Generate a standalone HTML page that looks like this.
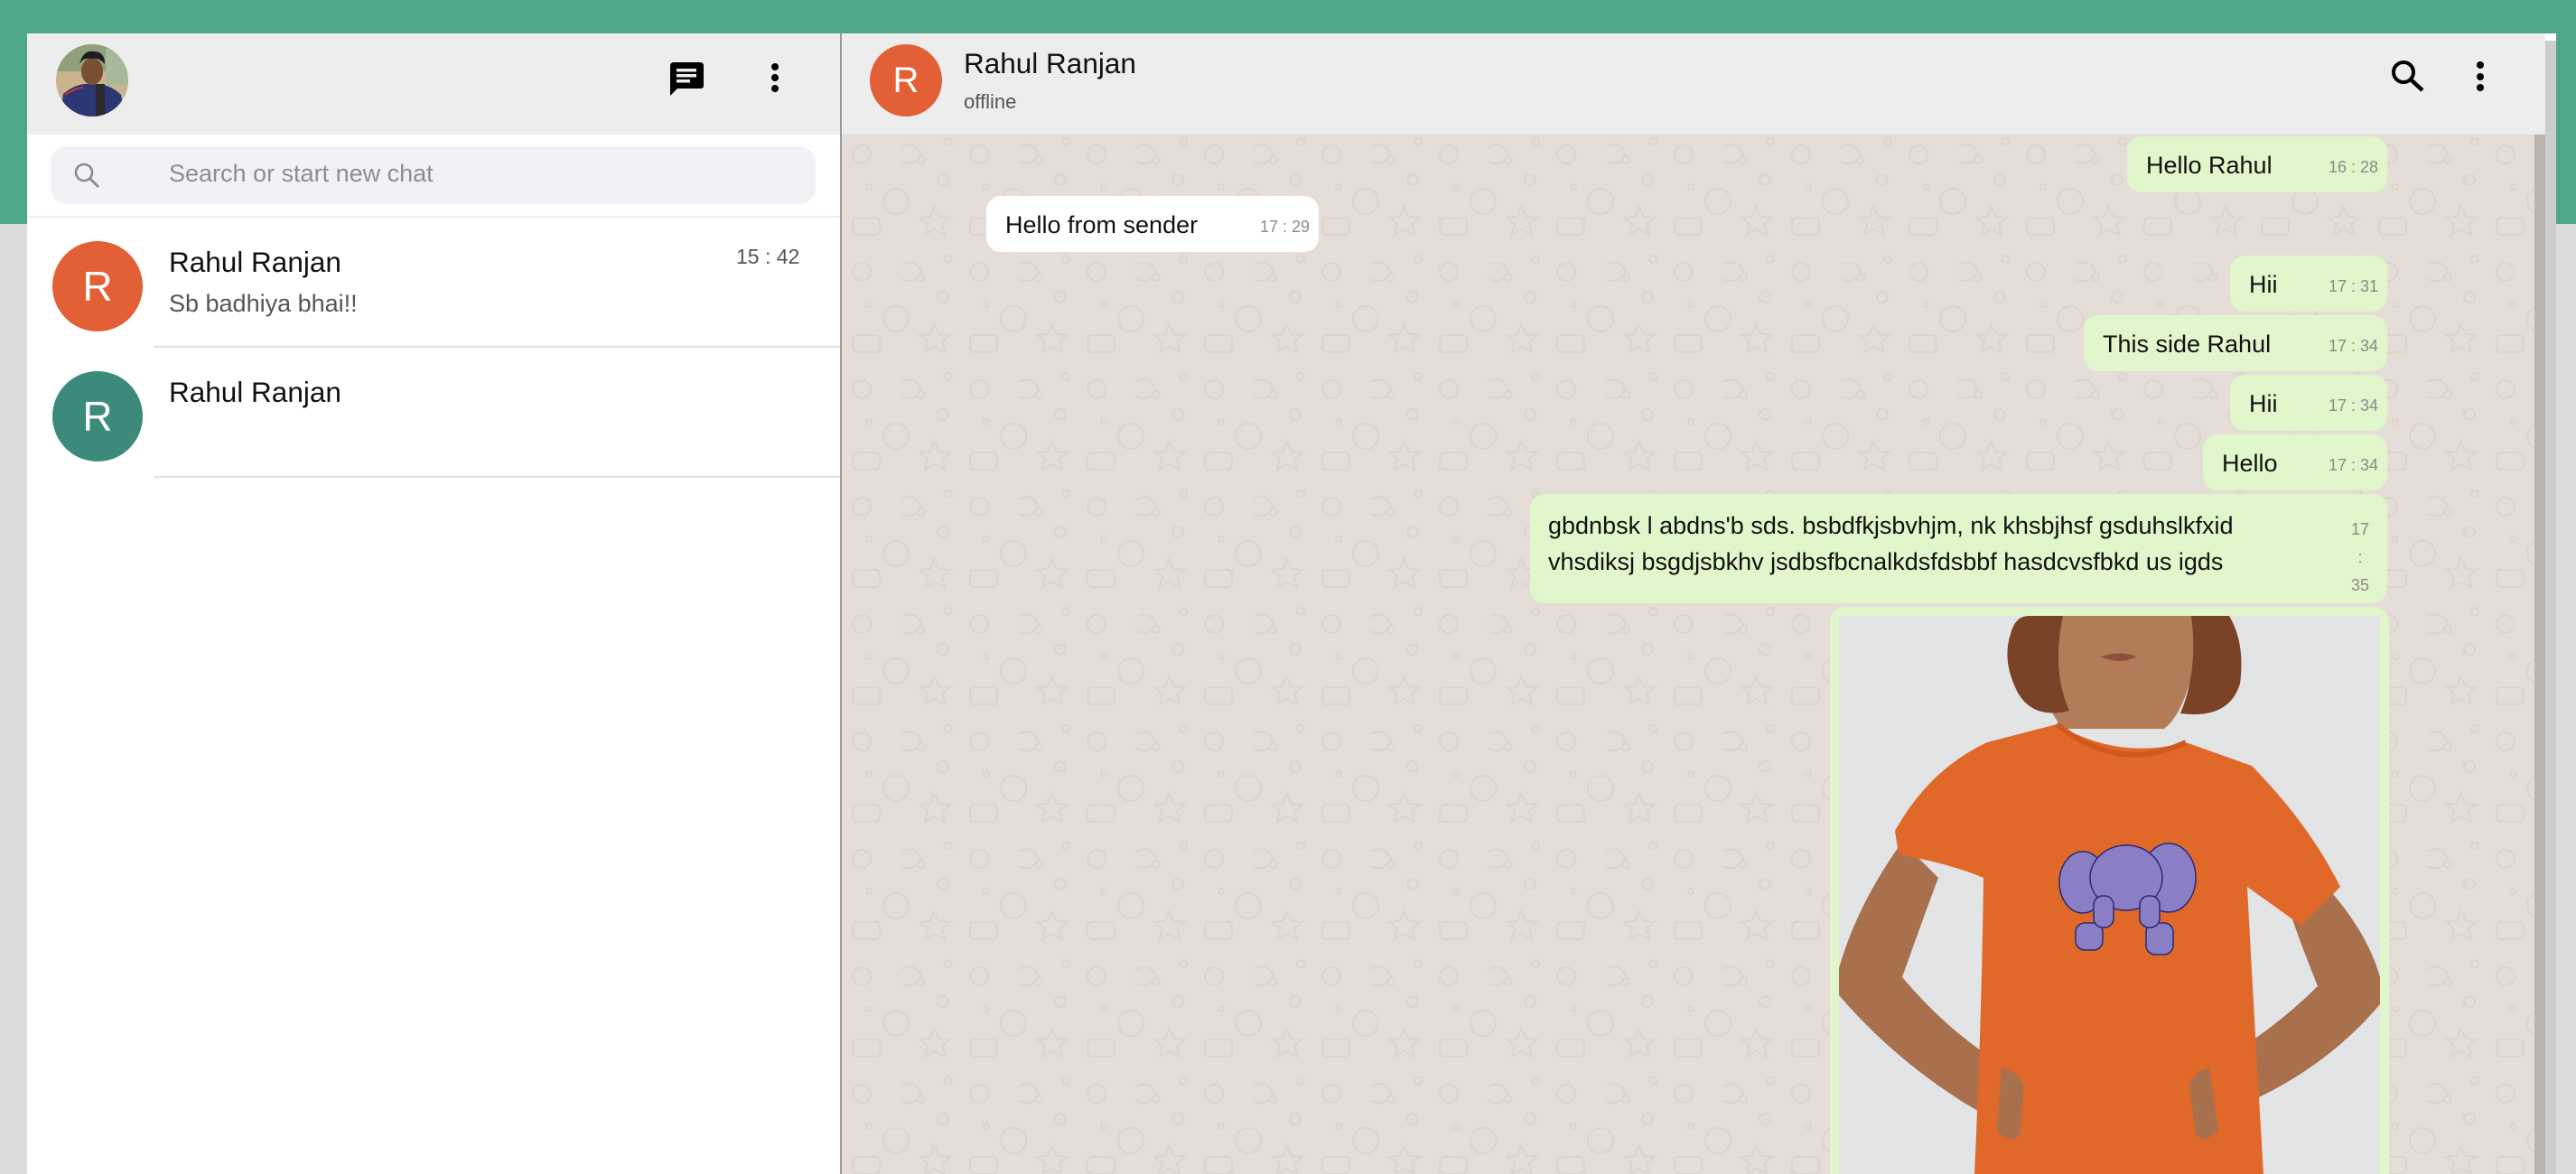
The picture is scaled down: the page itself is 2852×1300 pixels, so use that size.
<!DOCTYPE html>
<html><head><meta charset="utf-8">
<style>
*{margin:0;padding:0;box-sizing:border-box}
html,body{width:2852px;height:1300px;overflow:hidden}
body{background:#dcdcdc;font-family:"Liberation Sans",Arial,sans-serif;position:relative}
.abs{position:absolute}
.green{left:0;top:0;width:2852px;height:248px;background:#4ea787}
.left{left:30px;top:37px;width:900px;height:1263px;background:#fff}
.lhead{left:30px;top:37px;width:900px;height:112px;background:#ededed}
.search{left:56px;top:162px;width:847px;height:64px;background:#f0f2f5;border-radius:18px}
.ph{left:187px;top:177px;font-size:27px;color:#8e8e8e;white-space:nowrap}
.av{border-radius:50%;color:#fff;font-size:46px;text-align:center}
.name{font-size:31.5px;color:#111;white-space:nowrap}
.right{left:930px;top:37px;width:1888px;height:1263px;background:#e5ddd7;border-left:2px solid #9a9a9a}
.rhead{left:932px;top:37px;width:1886px;height:112px;background:#ededed}
.b{position:absolute;height:62px;border-radius:16px;background:#e1f6cb;white-space:nowrap}
.b .t{position:absolute;left:21px;top:17px;font-size:27px;color:#111}
.b .tm{position:absolute;right:10px;top:24px;font-size:18px;color:#8a8a8a}
</style></head><body>
<div class="abs green"></div>
<div class="abs left"></div>
<div class="abs lhead"></div>
<svg class="abs" style="left:62px;top:49px" width="80" height="80" viewBox="0 0 80 80">
<defs><clipPath id="c"><circle cx="40" cy="40" r="40"/></clipPath></defs>
<g clip-path="url(#c)">
<rect width="80" height="80" fill="#c9b48e"/>
<rect width="80" height="30" fill="#8fa07a"/>
<rect x="55" y="5" width="25" height="40" fill="#a8b89a"/>
<path d="M5 80 L8 55 Q20 45 32 44 L48 44 Q62 46 72 56 L76 80Z" fill="#2b3672"/>
<path d="M10 56 Q22 48 30 48" stroke="#c33" stroke-width="2" fill="none"/>
<ellipse cx="40" cy="30" rx="12" ry="15" fill="#7a4e33"/>
<path d="M26 22 Q30 6 42 8 Q54 8 54 22 Q48 14 40 16 Q30 14 26 22Z" fill="#1b1b24"/>
<rect x="44" y="44" width="10" height="36" fill="#2a2a2e"/>
</g></svg>
<svg class="abs" style="left:742px;top:69px" width="37" height="38" viewBox="0 0 37 38">
<path d="M4 0 H33 Q37 0 37 4 V26 Q37 29 33 29 H8 L0 37 V4 Q0 0 4 0Z" fill="#000"/>
<rect x="7" y="7" width="22" height="3.5" fill="#ededed"/>
<rect x="7" y="13" width="22" height="3.5" fill="#ededed"/>
<rect x="7" y="19" width="15" height="3.5" fill="#ededed"/>
</svg>
<svg class="abs" style="left:852px;top:66px" width="12" height="40"><circle cx="6" cy="8" r="4"/><circle cx="6" cy="20" r="4"/><circle cx="6" cy="32" r="4"/></svg>
<div class="abs search"></div>
<svg class="abs" style="left:80px;top:178px" width="34" height="34" viewBox="0 0 34 34"><circle cx="13" cy="13" r="9" stroke="#8b8b8b" stroke-width="2.6" fill="none"/><path d="M19.5 19.5 L29 29" stroke="#8b8b8b" stroke-width="2.8"/></svg>
<div class="abs ph">Search or start new chat</div>
<div class="abs" style="left:30px;top:239px;width:900px;height:2px;background:#ececec"></div>
<div class="abs av" style="left:58px;top:267px;width:100px;height:100px;background:#e35f35;line-height:100px">R</div>
<div class="abs name" style="left:187px;top:272px">Rahul Ranjan</div>
<div class="abs" style="left:815px;top:271px;font-size:23px;color:#555;white-space:nowrap">15 : 42</div>
<div class="abs" style="left:187px;top:321px;font-size:27px;color:#555;white-space:nowrap">Sb badhiya bhai!!</div>
<div class="abs" style="left:170px;top:383px;width:760px;height:2px;background:#e0e0e0"></div>
<div class="abs av" style="left:58px;top:411px;width:100px;height:100px;background:#3b8a7b;line-height:100px">R</div>
<div class="abs name" style="left:187px;top:416px">Rahul Ranjan</div>
<div class="abs" style="left:170px;top:527px;width:760px;height:2px;background:#e0e0e0"></div>

<div class="abs right"></div>
<svg class="abs" style="left:932px;top:149px" width="1874" height="1151">
<defs><pattern id="p" width="130" height="130" patternUnits="userSpaceOnUse">
<g fill="none" stroke="#ddd4cc" stroke-width="2">
<circle cx="22" cy="22" r="10"/><circle cx="88" cy="28" r="4"/><circle cx="60" cy="74" r="14"/>
<path d="M102 80 l6 11 l12 1 l-9 7 l3 12 l-12 -6 l-10 6 l3 -12 l-9 -7 l12 -1z"/>
<rect x="12" y="92" width="30" height="19" rx="5"/><circle cx="118" cy="8" r="4"/>
<path d="M66 14 q15 -8 22 8 q-8 15 -22 8"/><circle cx="30" cy="58" r="3"/><circle cx="112" cy="50" r="6"/>
</g></pattern></defs>
<rect width="1874" height="1151" fill="url(#p)"/>
</svg>
<div class="abs" style="left:2806px;top:149px;width:12px;height:1151px;background:#b9b4ae"></div>
<div class="abs" style="left:2818px;top:37px;width:12px;height:8px;background:#fff"></div>
<div class="abs" style="left:2818px;top:45px;width:12px;height:1255px;background:#cdcdcd"></div>
<div class="abs rhead"></div>
<div class="abs av" style="left:963px;top:49px;width:80px;height:80px;background:#e35f35;line-height:80px;font-size:40px">R</div>
<div class="abs name" style="left:1067px;top:52px">Rahul Ranjan</div>
<div class="abs" style="left:1067px;top:100px;font-size:22px;color:#555">offline</div>
<svg class="abs" style="left:2644px;top:63px" width="44" height="42" viewBox="0 0 44 42"><circle cx="17" cy="17" r="11" stroke="#000" stroke-width="4" fill="none"/><path d="M25 25 L38 37" stroke="#000" stroke-width="4.5"/></svg>
<svg class="abs" style="left:2740px;top:64px" width="12" height="40"><circle cx="6" cy="8" r="4"/><circle cx="6" cy="21" r="4"/><circle cx="6" cy="33" r="4"/></svg>

<div class="b" style="left:2355px;top:151px;width:288px"><span class="t">Hello Rahul</span><span class="tm">16 : 28</span></div>
<div class="b" style="left:1092px;top:217px;width:368px;background:#fff"><span class="t">Hello from sender</span><span class="tm">17 : 29</span></div>
<div class="b" style="left:2469px;top:283px;width:174px"><span class="t">Hii</span><span class="tm">17 : 31</span></div>
<div class="b" style="left:2307px;top:349px;width:336px"><span class="t">This side Rahul</span><span class="tm">17 : 34</span></div>
<div class="b" style="left:2469px;top:415px;width:174px"><span class="t">Hii</span><span class="tm">17 : 34</span></div>
<div class="b" style="left:2439px;top:481px;width:204px"><span class="t">Hello</span><span class="tm">17 : 34</span></div>
<div class="b" style="left:1694px;top:547px;width:949px;height:121px">
<div style="position:absolute;left:20px;top:15px;font-size:27px;line-height:40px;color:#111">gbdnbsk l abdns'b sds. bsbdfkjsbvhjm, nk khsbjhsf gsduhslkfxid<br>vhsdiksj bsgdjsbkhv jsdbsfbcnalkdsfdsbbf hasdcvsfbkd us igds</div>
<div style="position:absolute;left:907px;top:24px;font-size:18px;line-height:31px;color:#8a8a8a;text-align:center;width:24px">17<br>:<br>35</div>
</div>
<div class="abs" style="left:2026px;top:672px;width:619px;height:650px;background:#e1f6cb;border-radius:16px"></div>
<svg class="abs" style="left:2036px;top:682px" width="599" height="618" viewBox="0 0 599 618">
<rect width="599" height="618" fill="#e3e4e6"/>
<path d="M70 250 Q20 320 0 390 L0 420 Q60 490 140 540 L175 560 L185 500 Q120 460 70 400 Q95 330 110 290Z" fill="#a8704d"/>
<path d="M540 300 Q585 350 599 400 L599 430 Q540 500 450 540 L420 560 L410 500 Q480 460 530 410 Q510 360 500 330Z" fill="#a8704d"/>
<path d="M225 0 H395 L392 60 Q380 110 360 125 L250 125 Q230 110 225 60Z" fill="#b27c58"/>
<path d="M190 20 Q195 0 210 0 L248 0 Q235 60 255 105 Q215 115 198 85 Q180 50 190 20Z" fill="#7a4328"/>
<path d="M395 0 L432 0 Q450 30 444 75 Q432 115 378 108 Q398 60 390 0Z" fill="#7a4328"/>
<path d="M290 45 Q310 38 330 45 Q310 55 290 45Z" fill="#8e4f3e"/>
<path d="M241 120 Q310 160 384 140 L457 166 Q520 230 555 300 L512 343 Q480 320 452 300 Q460 450 470 618 L150 618 Q158 450 160 290 Q125 275 66 264 L62 238 Q100 170 164 140Z" fill="#e0692a"/>
<path d="M241 120 Q310 175 384 140" stroke="#d05a1e" stroke-width="6" fill="none"/>
<path d="M180 500 Q200 505 205 520 L200 575 Q190 585 175 570Z" fill="#a8704d"/>
<path d="M410 500 Q392 505 388 520 L395 575 Q405 585 420 570Z" fill="#a8704d"/>
<g fill="#8a7fc4" stroke="#2a2a7a" stroke-width="1.5">
<ellipse cx="270" cy="295" rx="26" ry="34"/>
<ellipse cx="365" cy="290" rx="30" ry="38"/>
<ellipse cx="318" cy="290" rx="40" ry="36"/>
<rect x="262" y="340" width="30" height="30" rx="10"/>
<rect x="340" y="340" width="30" height="35" rx="10"/>
<rect x="282" y="310" width="22" height="35" rx="10"/>
<rect x="333" y="310" width="22" height="35" rx="10"/>
</g>
</svg>
</body></html>
